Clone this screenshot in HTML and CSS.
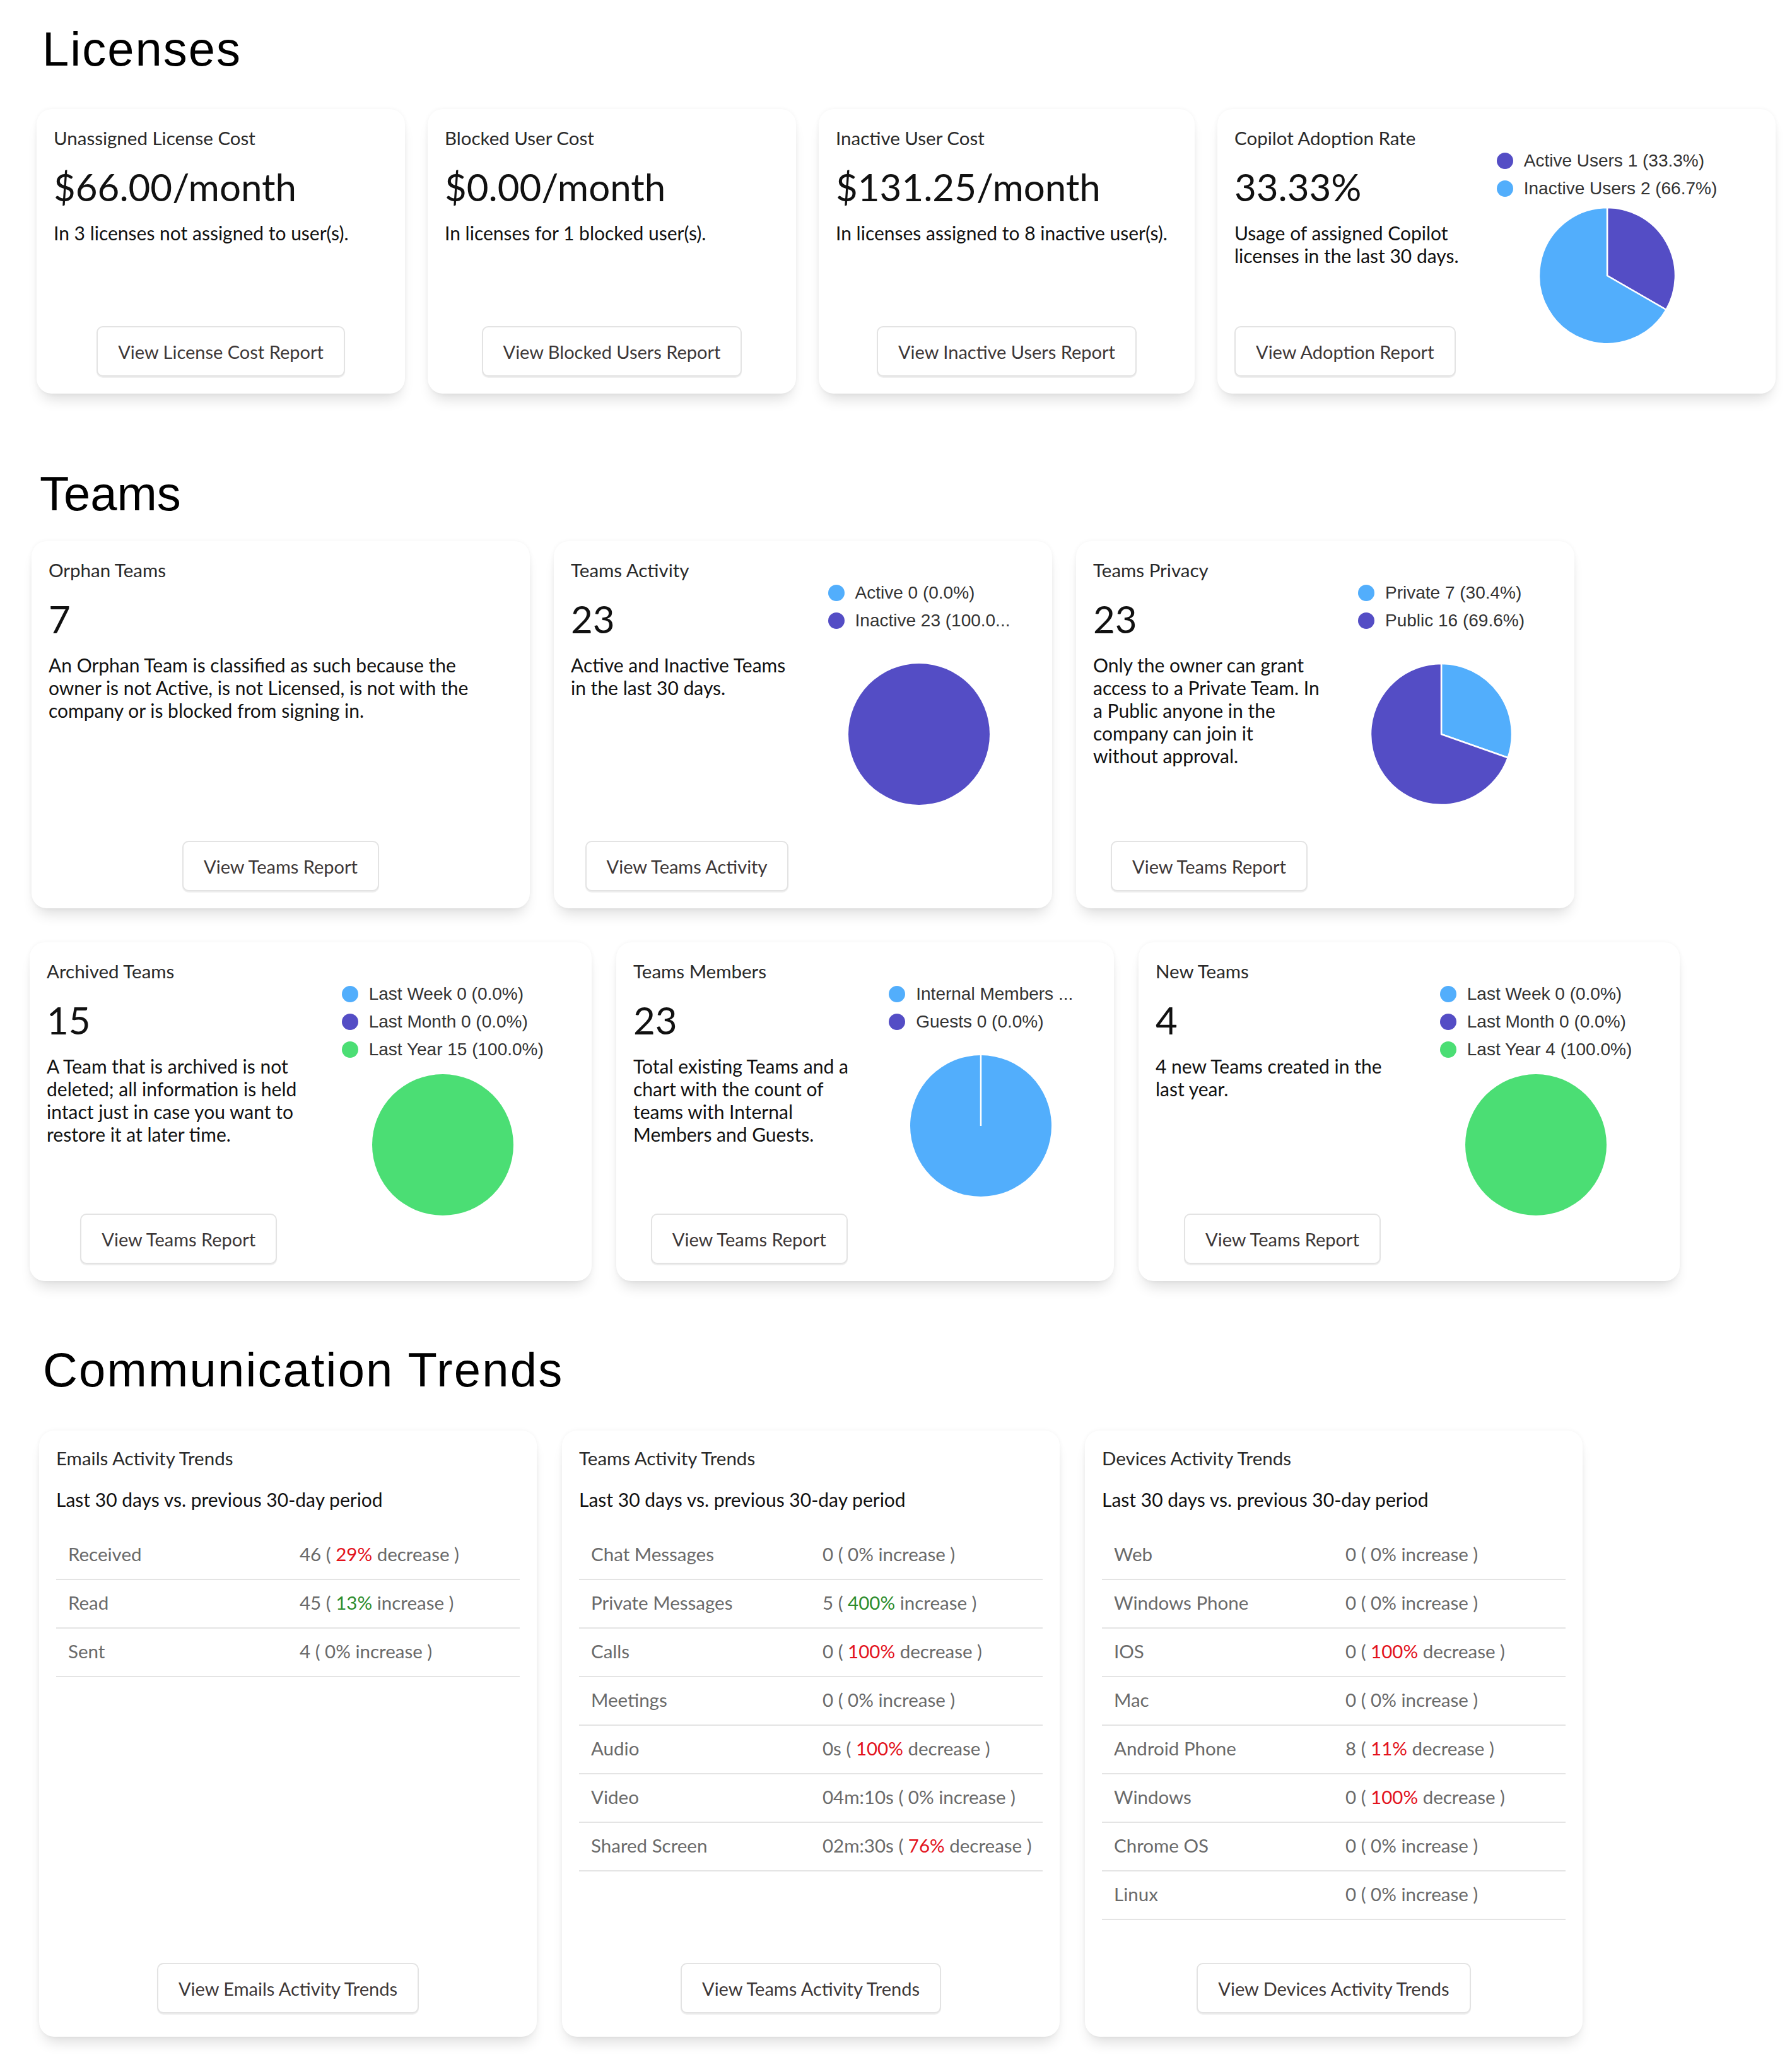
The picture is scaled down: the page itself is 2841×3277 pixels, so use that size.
FILE: index.html
```html
<!DOCTYPE html>
<html lang="en">
<head>
<meta charset="utf-8">
<title>Dashboard</title>
<link rel="stylesheet" href="styles.css">
</head>
<body>
<main class="page">

  <h1 class="sec-title sec-title--lic">Licenses</h1>
  <div class="row row--lic">
    <article class="card w584">
      <div class="col-main">
        <h3 class="card-title">Unassigned License Cost</h3>
        <div class="metric">$66.00/month</div>
        <p class="desc">In 3 licenses not assigned to user(s).</p>
        <button class="btn">View License Cost Report</button>
      </div>
    </article>
    <article class="card w584">
      <div class="col-main">
        <h3 class="card-title">Blocked User Cost</h3>
        <div class="metric">$0.00/month</div>
        <p class="desc">In licenses for 1 blocked user(s).</p>
        <button class="btn">View Blocked Users Report</button>
      </div>
    </article>
    <article class="card w596">
      <div class="col-main">
        <h3 class="card-title">Inactive User Cost</h3>
        <div class="metric">$131.25/month</div>
        <p class="desc">In licenses assigned to 8 inactive user(s).</p>
        <button class="btn">View Inactive Users Report</button>
      </div>
    </article>
    <article class="card w885">
      <div class="col-main col-main--fixed">
        <h3 class="card-title">Copilot Adoption Rate</h3>
        <div class="metric">33.33%</div>
        <p class="desc">Usage of assigned Copilot licenses in the last 30 days.</p>
        <button class="btn btn--start">View Adoption Report</button>
      </div>
      <div class="col-chart col-chart--offset">
        <ul class="legend">
          <li class="legend-item"><span class="dot dot--purple"></span><span>Active Users 1 (33.3%)</span></li>
          <li class="legend-item"><span class="dot dot--blue"></span><span>Inactive Users 2 (66.7%)</span></li>
        </ul>
        <svg class="pie pie--sm chart--xs" viewBox="-109 -109 218 218" aria-hidden="true">
          <path class="slice slice--purple" d="M0,0 L0,-108 A108,108 0 0 1 93.53,54 Z"/>
          <path class="slice slice--blue" d="M0,0 L93.53,54 A108,108 0 1 1 0,-108 Z"/>
        </svg>
      </div>
    </article>
  </div>

  <h1 class="sec-title sec-title--teams">Teams</h1>
  <div class="row row--t1">
    <article class="card w790">
      <div class="col-main">
        <h3 class="card-title">Orphan Teams</h3>
        <div class="metric">7</div>
        <p class="desc desc--narrow">An Orphan Team is classified as such because the owner is not Active, is not Licensed, is not with the company or is blocked from signing in.</p>
        <button class="btn">View Teams Report</button>
      </div>
    </article>
    <article class="card w790">
      <div class="col-main">
        <h3 class="card-title">Teams Activity</h3>
        <div class="metric">23</div>
        <p class="desc">Active and Inactive Teams in the last 30 days.</p>
        <button class="btn">View Teams Activity</button>
      </div>
      <div class="col-chart">
        <ul class="legend">
          <li class="legend-item"><span class="dot dot--blue"></span><span>Active 0 (0.0%)</span></li>
          <li class="legend-item"><span class="dot dot--purple"></span><span>Inactive 23 (100.0...</span></li>
        </ul>
        <svg class="pie chart--l" viewBox="-113 -113 226 226" aria-hidden="true">
          <circle class="slice slice--purple" cx="0" cy="0" r="112"/>
        </svg>
      </div>
    </article>
    <article class="card w790">
      <div class="col-main">
        <h3 class="card-title">Teams Privacy</h3>
        <div class="metric">23</div>
        <p class="desc desc--tight">Only the owner can grant access to a Private Team. In a Public anyone in the company can join it without approval.</p>
        <button class="btn">View Teams Report</button>
      </div>
      <div class="col-chart">
        <ul class="legend">
          <li class="legend-item"><span class="dot dot--blue"></span><span>Private 7 (30.4%)</span></li>
          <li class="legend-item"><span class="dot dot--purple"></span><span>Public 16 (69.6%)</span></li>
        </ul>
        <svg class="pie chart--l" viewBox="-113 -113 226 226" aria-hidden="true">
          <path class="slice slice--blue" d="M0,0 L0,-112 A112,112 0 0 1 105.6,37.3 Z"/>
          <path class="slice slice--purple" d="M0,0 L105.6,37.3 A112,112 0 1 1 0,-112 Z"/>
        </svg>
      </div>
    </article>
  </div>

  <div class="row row--t2">
    <article class="card w891">
      <div class="col-main">
        <h3 class="card-title">Archived Teams</h3>
        <div class="metric">15</div>
        <p class="desc">A Team that is archived is not deleted; all information is held intact just in case you want to restore it at later time.</p>
        <button class="btn">View Teams Report</button>
      </div>
      <div class="col-chart">
        <ul class="legend">
          <li class="legend-item"><span class="dot dot--blue"></span><span>Last Week 0 (0.0%)</span></li>
          <li class="legend-item"><span class="dot dot--purple"></span><span>Last Month 0 (0.0%)</span></li>
          <li class="legend-item"><span class="dot dot--green"></span><span>Last Year 15 (100.0%)</span></li>
        </ul>
        <svg class="pie chart--s" viewBox="-113 -113 226 226" aria-hidden="true">
          <circle class="slice slice--green" cx="0" cy="0" r="112"/>
        </svg>
      </div>
    </article>
    <article class="card w789">
      <div class="col-main">
        <h3 class="card-title">Teams Members</h3>
        <div class="metric">23</div>
        <p class="desc">Total existing Teams and a chart with the count of teams with Internal Members and Guests.</p>
        <button class="btn">View Teams Report</button>
      </div>
      <div class="col-chart">
        <ul class="legend">
          <li class="legend-item"><span class="dot dot--blue"></span><span>Internal Members ...</span></li>
          <li class="legend-item"><span class="dot dot--purple"></span><span>Guests 0 (0.0%)</span></li>
        </ul>
        <svg class="pie chart--m" viewBox="-113 -113 226 226" aria-hidden="true">
          <circle class="slice slice--blue" cx="0" cy="0" r="112"/>
          <line class="slice-edge" x1="0" y1="0" x2="0" y2="-112"/>
        </svg>
      </div>
    </article>
    <article class="card w858">
      <div class="col-main">
        <h3 class="card-title">New Teams</h3>
        <div class="metric">4</div>
        <p class="desc">4 new Teams created in the last year.</p>
        <button class="btn">View Teams Report</button>
      </div>
      <div class="col-chart">
        <ul class="legend">
          <li class="legend-item"><span class="dot dot--blue"></span><span>Last Week 0 (0.0%)</span></li>
          <li class="legend-item"><span class="dot dot--purple"></span><span>Last Month 0 (0.0%)</span></li>
          <li class="legend-item"><span class="dot dot--green"></span><span>Last Year 4 (100.0%)</span></li>
        </ul>
        <svg class="pie chart--s" viewBox="-113 -113 226 226" aria-hidden="true">
          <circle class="slice slice--green" cx="0" cy="0" r="112"/>
        </svg>
      </div>
    </article>
  </div>

  <h1 class="sec-title sec-title--comm">Communication Trends</h1>
  <div class="row row--comm">
    <article class="card card--comm w789">
      <h3 class="card-title comm-title">Emails Activity Trends</h3>
      <p class="comm-sub">Last 30 days vs. previous 30-day period</p>
      <div class="trend-table">
        <div class="trend-row"><span>Received</span><span>46 ( <em class="down">29%</em> decrease )</span></div>
        <div class="trend-row"><span>Read</span><span>45 ( <em class="up">13%</em> increase )</span></div>
        <div class="trend-row"><span>Sent</span><span>4 ( 0% increase )</span></div>
      </div>
      <button class="btn">View Emails Activity Trends</button>
    </article>
    <article class="card card--comm w789">
      <h3 class="card-title comm-title">Teams Activity Trends</h3>
      <p class="comm-sub">Last 30 days vs. previous 30-day period</p>
      <div class="trend-table">
        <div class="trend-row"><span>Chat Messages</span><span>0 ( 0% increase )</span></div>
        <div class="trend-row"><span>Private Messages</span><span>5 ( <em class="up">400%</em> increase )</span></div>
        <div class="trend-row"><span>Calls</span><span>0 ( <em class="down">100%</em> decrease )</span></div>
        <div class="trend-row"><span>Meetings</span><span>0 ( 0% increase )</span></div>
        <div class="trend-row"><span>Audio</span><span>0s ( <em class="down">100%</em> decrease )</span></div>
        <div class="trend-row"><span>Video</span><span>04m:10s ( 0% increase )</span></div>
        <div class="trend-row"><span>Shared Screen</span><span>02m:30s ( <em class="down">76%</em> decrease )</span></div>
      </div>
      <button class="btn">View Teams Activity Trends</button>
    </article>
    <article class="card card--comm w789">
      <h3 class="card-title comm-title">Devices Activity Trends</h3>
      <p class="comm-sub">Last 30 days vs. previous 30-day period</p>
      <div class="trend-table">
        <div class="trend-row"><span>Web</span><span>0 ( 0% increase )</span></div>
        <div class="trend-row"><span>Windows Phone</span><span>0 ( 0% increase )</span></div>
        <div class="trend-row"><span>IOS</span><span>0 ( <em class="down">100%</em> decrease )</span></div>
        <div class="trend-row"><span>Mac</span><span>0 ( 0% increase )</span></div>
        <div class="trend-row"><span>Android Phone</span><span>8 ( <em class="down">11%</em> decrease )</span></div>
        <div class="trend-row"><span>Windows</span><span>0 ( <em class="down">100%</em> decrease )</span></div>
        <div class="trend-row"><span>Chrome OS</span><span>0 ( 0% increase )</span></div>
        <div class="trend-row"><span>Linux</span><span>0 ( 0% increase )</span></div>
      </div>
      <button class="btn">View Devices Activity Trends</button>
    </article>
  </div>

</main>
</body>
</html>
```

FILE: styles.css
```css
* {
  box-sizing: border-box;
  margin: 0;
  padding: 0;
}

html, body {
  background: #ffffff;
}

body {
  margin: 0;
  width: 2841px;
  min-height: 3277px;
  font-family: Lato, "Open Sans", sans-serif;
  color: #111111;
}

.page {
  padding-bottom: 48px;
}

/* Section headings */
.sec-title {
  font-family: "Liberation Sans", Arial, sans-serif;
  font-weight: 400;
  font-size: 76px;
  line-height: 76px;
  color: #000000;
}

.sec-title--lic {
  margin: 40px 0 57px 67px;
  letter-spacing: 2px;
}

.sec-title--teams {
  margin: 121px 0 37px 63px;
}

.sec-title--comm {
  margin: 103px 0 58px 68px;
  letter-spacing: 2.2px;
}

/* Rows of cards */
.row {
  display: flex;
  align-items: stretch;
}

.row--lic {
  padding-left: 58px;
  gap: 36px;
  height: 451px;
}

.row--t1 {
  padding-left: 50px;
  gap: 38px;
  height: 582px;
}

.row--t2 {
  padding-left: 47px;
  gap: 39px;
  height: 537px;
  margin-top: 54px;
}

.row--comm {
  padding-left: 62px;
  gap: 40px;
  height: 961px;
}

.w584 { width: 584px; }
.w596 { width: 596px; }
.w885 { width: 885px; }
.w790 { width: 790px; }
.w789 { width: 789px; }
.w891 { width: 891px; }
.w858 { width: 858px; }

/* Cards */
.card {
  flex: none;
  display: flex;
  background: #ffffff;
  border-radius: 24px;
  padding: 27px 27px 27px;
  box-shadow: 0 16px 22px -8px rgba(0, 0, 0, 0.14), 0 0 7px rgba(0, 0, 0, 0.05);
}

.col-main {
  flex: 1 1 0;
  min-width: 0;
  display: flex;
  flex-direction: column;
}

.col-main--fixed {
  flex: 0 0 362px;
}

.col-chart {
  flex: 1 1 0;
  min-width: 0;
  display: flex;
  flex-direction: column;
  align-items: center;
}

.col-chart--offset {
  padding-right: 12px;
}

.card-title {
  font-size: 29.5px;
  line-height: 38px;
  font-weight: 400;
  color: #2a2a2a;
}

.metric {
  font-size: 60px;
  line-height: 70px;
  margin-top: 23px;
  color: #111111;
}

.desc {
  font-size: 30px;
  line-height: 36px;
  margin-top: 20px;
  color: #111111;
}

.desc--narrow {
  max-width: 690px;
}

.desc--tight {
  max-width: 361px;
}

/* Buttons */
.btn {
  margin-top: auto;
  align-self: center;
  height: 80px;
  padding: 0 32px;
  display: inline-flex;
  align-items: center;
  justify-content: center;
  background: #ffffff;
  border: 2px solid #e3e3e3;
  border-radius: 10px;
  box-shadow: 0 2px 1px rgba(0, 0, 0, 0.07);
  font-family: Lato, "Open Sans", sans-serif;
  font-size: 29px;
  color: #3d3737;
  white-space: nowrap;
}

.btn--start {
  align-self: flex-start;
}

/* Legends */
.legend {
  list-style: none;
  margin-top: 33px;
  display: flex;
  flex-direction: column;
  font-family: "Liberation Sans", Arial, sans-serif;
  font-size: 28px;
  color: #333333;
}

.legend-item {
  display: flex;
  align-items: center;
  gap: 17px;
  height: 44px;
  white-space: nowrap;
}

.dot {
  flex: none;
  width: 26px;
  height: 26px;
  border-radius: 50%;
}

.dot--purple { background: #544dc5; }
.dot--blue { background: #52aefc; }
.dot--green { background: #4bde74; }

/* Pies */
.pie {
  display: block;
  width: 226px;
  height: 226px;
  flex: none;
}

.pie--sm {
  width: 218px;
  height: 218px;
}

.chart--xs { margin-top: 7px; }
.chart--s { margin-top: 16px; }
.chart--m { margin-top: 30px; }
.chart--l { margin-top: 45px; }

.slice {
  stroke: #ffffff;
  stroke-width: 2.5;
  stroke-linejoin: round;
}

.slice--purple { fill: #544dc5; }
.slice--blue { fill: #52aefc; }
.slice--green { fill: #4bde74; }

circle.slice { stroke: none; }

.slice-edge {
  stroke: #ffffff;
  stroke-width: 2.5;
}

/* Communication trend cards */
.card--comm {
  flex-direction: column;
  padding: 25px 27px 37px;
}

.comm-sub {
  margin-top: 27px;
  font-size: 30px;
  line-height: 38px;
  color: #111111;
}

.trend-table {
  margin-top: 32px;
  display: flex;
  flex-direction: column;
}

.trend-row {
  display: grid;
  grid-template-columns: 367px 1fr;
  align-items: center;
  height: 77px;
  padding-left: 19px;
  padding-bottom: 4px;
  border-bottom: 2px solid #e4e4e4;
  font-size: 29.5px;
  color: #6a6a6a;
  white-space: nowrap;
}

.trend-row em {
  font-style: normal;
}

.trend-row .down { color: #e3121c; }
.trend-row .up { color: #2b8c2b; }
```
